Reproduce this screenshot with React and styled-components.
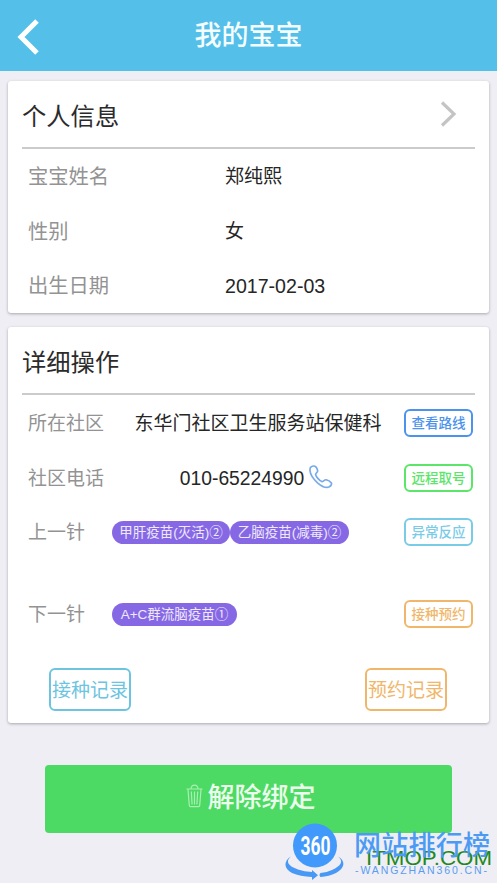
import React from "react";
import styled, { createGlobalStyle } from "styled-components";

const GlobalStyle = createGlobalStyle`
  * {
    box-sizing: border-box;
  }
  body {
    margin: 0;
    background-color: #eeeef4;
    overflow: hidden;
    font-family: "Liberation Sans", "Noto Sans CJK SC", sans-serif;
  }
`;
const Page = styled.div`
  position: relative;
  width: 497px;
  height: 883px;
  overflow: hidden;
  background-color: #eeeef4;
`;
const Header = styled.header`
  display: grid;
  grid-template-columns: 60px 1fr 60px;
  align-items: center;
  height: 71px;
  background-color: #54bfe9;
`;
const BackButton = styled.a`
  display: flex;
  padding: 3px 0 0 17px;
`;
const HeaderTitle = styled.h1`
  margin: 0;
  color: #f4fdff;
  font-size: 27px;
  font-weight: 500;
  line-height: 40px;
  text-align: center;
`;
const Content = styled.main`
  display: flex;
  flex-direction: column;
  gap: 14px;
  padding: 10px 8px 0;
`;
const Card = styled.section`
  height: ${props => props.height}px;
  padding: 0 14px;
  background-color: #fff;
  border-radius: 3px;
  box-shadow: 0 1px 3px rgba(0, 0, 0, 0.3);
`;
const CardHeader = styled.div`
  display: flex;
  align-items: center;
  justify-content: space-between;
  height: 68px;
  padding: 0 17px 0 0;
  border-bottom: 2px solid #cbcbcb;
`;
const CardTitle = styled.h2`
  margin: 0;
  padding-top: 6px;
  color: #2b2b2b;
  font-size: 24.3px;
  font-weight: 400;
  line-height: 36px;
`;
const InfoRow = styled.div`
  display: grid;
  grid-template-columns: 197px 1fr;
  align-items: center;
  height: 54.6px;
  padding: 2px 0 0 6px;
`;
const ActionRow = styled.div`
  display: grid;
  grid-template-columns: 84px 1fr 69px;
  align-items: start;
  height: ${props => props.height || 54.7}px;
  padding: 13px 2px 0 6px;
`;
const Label = styled.span`
  color: #939393;
  font-size: ${props => props.size || 19}px;
  line-height: 28px;
  white-space: nowrap;
`;
const ActionLabel = styled(Label)`
  padding-top: 2px;
`;
const Value = styled.span`
  color: #262626;
  font-size: ${props => props.size || 19}px;
  line-height: 28px;
  white-space: nowrap;
`;
const ActionValue = styled(Value)`
  display: flex;
  align-items: center;
  justify-content: center;
  gap: 5px;
  padding: 2px ${props => props.inset || 0}px 0 0;

  svg {
    margin-bottom: 4px;
  }
`;
const Tags = styled.div`
  display: flex;
  padding-top: 4px;
`;
const Tag = styled.span`
  width: ${props => props.width}px;
  height: 23px;
  border-radius: 12px;
  background-color: #8768e4;
  color: #eee9ff;
  font-size: 13.5px;
  line-height: 24px;
  text-align: center;
  white-space: nowrap;
`;
const SmallButton = styled.button`
  width: 69px;
  height: 28px;
  margin-top: 1px;
  padding: 0 0 2px;
  border: 2px solid ${props => props.color};
  border-radius: 6px;
  background: none;
  color: ${props => props.color};
  font: 500 13.5px/22px "Noto Sans CJK SC", sans-serif;
  white-space: nowrap;
`;
const RecordButtons = styled.div`
  display: flex;
  justify-content: space-between;
  padding: 0 28px 0 27px;
`;
const RecordButton = styled(SmallButton)`
  width: 82px;
  height: 43px;
  margin-top: 0;
  padding: 0;
  font-size: 19px;
  font-weight: 400;
  line-height: 38px;
`;
const UnbindButton = styled.button`
  display: flex;
  align-items: center;
  justify-content: center;
  gap: 5px;
  width: 407px;
  height: 68px;
  margin: 28px 0 0 37px;
  padding: 0 0 6px 4px;
  border: 0;
  border-radius: 4px;
  background-color: #4cda64;
  color: #ecffec;
  font: 500 27px/40px "Noto Sans CJK SC", sans-serif;
`;
const Watermark = styled.div`
  position: absolute;
  right: 0;
  bottom: 0;
  width: 217px;
  height: 63px;
`;

const Chevron = ({ width, height, points, color, stroke }) => (
  <svg width={width} height={height} fill="none">
    <polyline points={points} stroke={color} strokeWidth={stroke} />
  </svg>
);

const PhoneIcon = () => (
  <svg width="24" height="24" viewBox="0 0 24 24" fill="none">
    <path
      d="M1.8 2.2C3.1 1 5.4.5 6.6 1.7C7.6 2.7 8.6 4.8 8.7 5.8C8.8 7.2 6.5 8.2 6.6 9.5C6.8 11.5 10.9 16.1 13 16.6C14.7 17 15.4 14.4 17.2 14.8C18.8 15.2 21.4 16.8 22.2 17.8C23.2 19.2 21.8 20.9 20.3 21.8C17.6 23.3 13.2 21.8 8.5 17.8C4 13.7 1.3 9.4 1 5.8C.9 4.2.9 3 1.8 2.2Z"
      stroke="#78abe8"
      strokeWidth="1.7"
    />
  </svg>
);

const TrashIcon = () => (
  <svg width="17" height="24" viewBox="0 0 17 24" fill="none">
    <path
      d="M.5 5H16.5M5 4.5Q5.5 1.2 8.5 1.2Q11.5 1.2 12 4.5M2 5.5L3.3 21.5Q3.4 22.7 4.5 22.7H12.5Q13.6 22.7 13.7 21.5L15 5.5M5.3 7.5L6.1 20.5M8.5 7.5V20.5M11.7 7.5L10.9 20.5"
      stroke="#a9efb3"
      strokeWidth="1.2"
    />
  </svg>
);

const SiteMark = () => (
  <Watermark>
    <svg width="217" height="63">
      <path
        d="M11 36.5C5 41 8 46 18 49.5Q24 51.5 32 52V50L38 55.3L32 60V57Q20 56.5 12 53C4 49 3 41 11 36.5Z"
        fill="#4898f5"
      />
      <path
        d="M58 36.5C64 41 61 46 52 50Q47 52.3 40.5 53Q38.5 55 40.5 57Q49 56.5 56 53C65 48 66 41 58 36.5Z"
        fill="#4898f5"
      />
      <circle cx="35" cy="25.5" r="22" fill="#4199fb" />
      <text
        x="20.5"
        y="34.5"
        textLength="30"
        lengthAdjust="spacingAndGlyphs"
        fill="#fff"
        fontFamily="Roboto, sans-serif"
        fontSize="25"
        fontWeight="700"
      >
        360
      </text>
      <text
        x="86"
        y="45"
        textLength="126"
        lengthAdjust="spacingAndGlyphs"
        fill="#238820"
        fontFamily="Liberation Sans, sans-serif"
        fontSize="21"
      >
        ITMOP.COM
      </text>
      <text
        x="74"
        y="35"
        textLength="136"
        fill="#4b9af3"
        fontFamily="Noto Sans CJK SC, sans-serif"
        fontSize="27"
        fontWeight="500"
      >
        网站排行榜
      </text>
      <text
        x="75"
        y="54"
        textLength="132"
        fill="#5a9df0"
        fontFamily="Liberation Sans, sans-serif"
        fontSize="10.5"
      >
        -WANGZHAN360.CN-
      </text>
    </svg>
  </Watermark>
);

const App = () => (
  <Page>
    <GlobalStyle />
    <Header>
      <BackButton>
        <Chevron
          width={23}
          height={36}
          points="20,2 4,18 20,34"
          color="#fff"
          stroke={5}
        />
      </BackButton>
      <HeaderTitle>我的宝宝</HeaderTitle>
    </Header>
    <Content>
      <Card height={232}>
        <CardHeader>
          <CardTitle>个人信息</CardTitle>
          <Chevron
            width={18}
            height={26}
            points="2,1.5 14,13 2,24.5"
            color="#c4c4c4"
            stroke={3.2}
          />
        </CardHeader>
        <InfoRow>
          <Label size={20.3}>宝宝姓名</Label>
          <Value>郑纯熙</Value>
        </InfoRow>
        <InfoRow>
          <Label size={20.3}>性别</Label>
          <Value>女</Value>
        </InfoRow>
        <InfoRow>
          <Label size={20.3}>出生日期</Label>
          <Value size={19.6}>2017-02-03</Value>
        </InfoRow>
      </Card>
      <Card height={396}>
        <CardHeader>
          <CardTitle>详细操作</CardTitle>
        </CardHeader>
        <ActionRow>
          <ActionLabel>所在社区</ActionLabel>
          <ActionValue>东华门社区卫生服务站保健科</ActionValue>
          <SmallButton color="#4b93ec">查看路线</SmallButton>
        </ActionRow>
        <ActionRow>
          <ActionLabel>社区电话</ActionLabel>
          <ActionValue size={19.3} inset={3}>
            010-65224990
            <PhoneIcon />
          </ActionValue>
          <SmallButton color="#5be569">远程取号</SmallButton>
        </ActionRow>
        <ActionRow height={82}>
          <ActionLabel>上一针</ActionLabel>
          <Tags>
            <Tag width={118}>甲肝疫苗(灭活)②</Tag>
            <Tag width={119}>乙脑疫苗(减毒)②</Tag>
          </Tags>
          <SmallButton color="#7acbe7">异常反应</SmallButton>
        </ActionRow>
        <ActionRow height={81.6}>
          <ActionLabel>下一针</ActionLabel>
          <Tags>
            <Tag width={125}>A+C群流脑疫苗①</Tag>
          </Tags>
          <SmallButton color="#f0b76c">接种预约</SmallButton>
        </ActionRow>
        <RecordButtons>
          <RecordButton color="#6dc4e0">接种记录</RecordButton>
          <RecordButton color="#f0b76c">预约记录</RecordButton>
        </RecordButtons>
      </Card>
      <UnbindButton>
        <TrashIcon />
        解除绑定
      </UnbindButton>
    </Content>
    <SiteMark />
  </Page>
);

export default App;
